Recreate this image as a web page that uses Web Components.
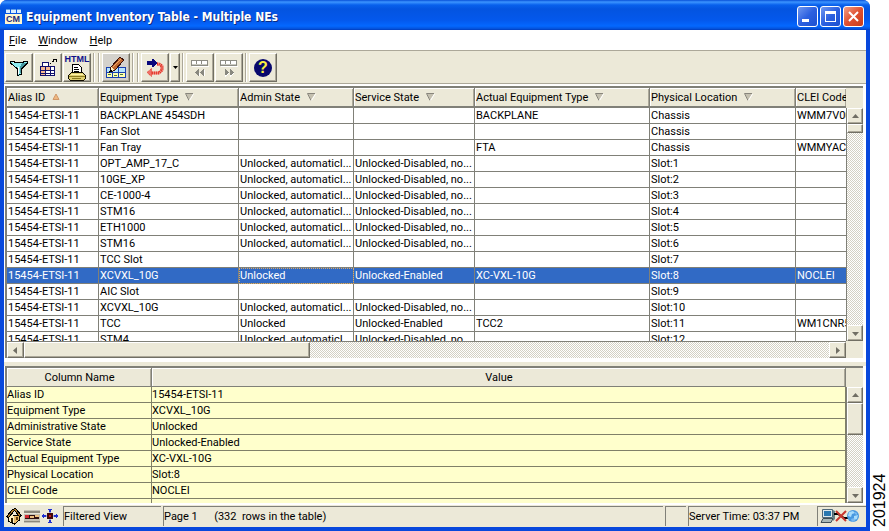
<!DOCTYPE html>
<html lang="en">
<head>
<meta charset="utf-8">
<title>Equipment Inventory Table - Multiple NEs</title>
<style>
  body {
    margin: 0;
    background: #fff;
    color: #000;
    font: 11px/15px Roboto, "DejaVu Sans Condensed", sans-serif;
    --face: #ece9d8;
    --shadow: #aca899;
    --line: #808078;
  }
</style>
</head>
<body>
<inventory-app></inventory-app>

<script>
const columns = [
  { name: "Alias ID", width: 92, sort: "up" },
  { name: "Equipment Type", width: 140, sort: "down" },
  { name: "Admin State", width: 115, sort: "down" },
  { name: "Service State", width: 121, sort: "down" },
  { name: "Actual Equipment Type", width: 175, sort: "down" },
  { name: "Physical Location", width: 146, sort: "down" },
  { name: "CLEI Code" },
];

const auto = "Unlocked, automaticI...";
const disabled = "Unlocked-Disabled, no...";
const equipment = [
  ["BACKPLANE 454SDH", "", "", "BACKPLANE", "Chassis", "WMM7V00"],
  ["Fan Slot", "", "", "", "Chassis", ""],
  ["Fan Tray", "", "", "FTA", "Chassis", "WMMYACT"],
  ["OPT_AMP_17_C", auto, disabled, "", "Slot:1", ""],
  ["10GE_XP", auto, disabled, "", "Slot:2", ""],
  ["CE-1000-4", auto, disabled, "", "Slot:3", ""],
  ["STM16", auto, disabled, "", "Slot:4", ""],
  ["ETH1000", auto, disabled, "", "Slot:5", ""],
  ["STM16", auto, disabled, "", "Slot:6", ""],
  ["TCC Slot", "", "", "", "Slot:7", ""],
  ["XCVXL_10G", "Unlocked", "Unlocked-Enabled", "XC-VXL-10G", "Slot:8", "NOCLEI"],
  ["AIC Slot", "", "", "", "Slot:9", ""],
  ["XCVXL_10G", auto, disabled, "", "Slot:10", ""],
  ["TCC", "Unlocked", "Unlocked-Enabled", "TCC2", "Slot:11", "WM1CNR5"],
  ["STM4", auto, disabled, "", "Slot:12", ""],
].map((row) => ["15454-ETSI-11", ...row]);

const details = [
  ["Alias ID", "15454-ETSI-11"],
  ["Equipment Type", "XCVXL_10G"],
  ["Administrative State", "Unlocked"],
  ["Service State", "Unlocked-Enabled"],
  ["Actual Equipment Type", "XC-VXL-10G"],
  ["Physical Location", "Slot:8"],
  ["CLEI Code", "NOCLEI"],
];

const icons = {
  app: `<svg width="17" height="17" viewBox="0 0 17 17" shape-rendering="crispEdges">
    <path fill="#d8ecff" d="M1 1h4v4H1zM6 1h5v4H6zM12 1h4v4h-4z"/>
    <path fill="#5c9ce8" d="M1 1h4v1H1zM6 1h5v1H6zM12 1h4v1h-4z"/>
    <path fill="#fff6d0" d="M0 6h17v10H0z"/>
    <text x="8" y="14" text-anchor="middle" fill="#1c2a7c" font-family="Liberation Sans" font-weight="bold" font-size="9">CM</text></svg>`,
  filter: `<svg width="20" height="18" viewBox="0 0 20 18" shape-rendering="crispEdges">
    <path fill="#8cecf0" d="M1 3h18v1l-6 6v6l-5 1v-7L1 4z"/>
    <path fill="#fff" d="M4 3h5v1H4zM9 8h1v7H9z"/>
    <path fill="#4898a0" d="M13 4h4l-4 4v6h-2V8z"/>
    <path fill="none" stroke="#000" d="M1.500 4v-2h4v1h9v-1h4v2l-6 6v5l-4 1.500V10z"/></svg>`,
  expand: `<svg width="20" height="20" viewBox="0 0 20 20" shape-rendering="crispEdges">
    <path fill="#10106c" d="M2 8h15v10H2zM4 4h7v5H4z"/>
    <path fill="#f5b890" d="M3 9h4v3H3zM8 9h4v3H8zM3 13h4v2H3zM3 16h4v1H3z"/>
    <path fill="#fff" d="M5 5h5v3H5zM13 9h3v3h-3zM8 13h4v2H8zM13 13h3v2h-3zM8 16h4v1H8zM13 16h3v1h-3z"/>
    <path fill="none" stroke="#000" stroke-dasharray="2 1" d="M12 6l6-5"/>
    <path fill="none" stroke="#000" d="M15 1.500h3.500V4"/></svg>`,
  pencil: `<svg width="22" height="24" viewBox="0 0 22 24" shape-rendering="crispEdges">
    <path fill="#1840b0" d="M1 11h20v11H1z"/>
    <path fill="#b4e4fc" d="M2 12h5v4H2zM8 12h5v4H8zM14 12h6v4h-6z"/>
    <path fill="#ffffb0" d="M2 17h5v4H2zM8 17h5v4H8zM14 17h6v4h-6z"/>
    <path fill="#487840" d="M3 18h3v1H3zM9 19h3v1H9zM15 18h3v1h-3z"/>
    <path fill="#c06830" stroke="#381008" d="M6 11L15 1l4 3-9 10-5 2z"/>
    <path fill="none" stroke="#f0a868" d="M8 11l8-8"/>
    <path fill="#fff0c0" d="M6 11l4 3-4 1z"/><path fill="#000" d="M5 14h2v2H4z"/></svg>`,
  redirect: `<svg width="20" height="20" viewBox="0 0 20 20">
    <path fill="none" stroke="#f49088" stroke-width="3" d="M12 6h2l3 2v4l-3 3H6"/>
    <path fill="none" stroke="#e03020" stroke-width="3" stroke-dasharray="1 1" d="M12 6h2l3 2v4l-3 3H6"/>
    <path fill="#f07068" stroke="#e03020" stroke-dasharray="1 1" d="M6.500 10.500v8L2 14.500z"/>
    <path fill="#08087c" shape-rendering="crispEdges" d="M2 3h5V1h1l4 4-4 4H7V7H2z"/></svg>`,
  caret: `<svg width="5" height="3" viewBox="0 0 5 3"><path d="M0 0h5L2.500 3z"/></svg>`,
  previous: `<svg width="18" height="18" viewBox="0 0 18 18" shape-rendering="crispEdges">
    <path fill="#8c8c84" d="M0 1h17v6H0z"/><path fill="#fff" d="M1 2h4v3H1zM6 2h4v3H6zM11 2h5v3h-5zM1 7h17v1H1z"/>
    <path fill="#c8c8c0" d="M1 5h15v1H1z"/>
    <path fill="#888880" d="M8 10v7l-4-3.500zM13 10v7l-4-3.500z"/><path fill="#fff" d="M8 17h1v-3H8zM13 17h1v-6h-1z"/></svg>`,
  next: `<svg width="18" height="18" viewBox="0 0 18 18" shape-rendering="crispEdges">
    <path fill="#8c8c84" d="M0 1h17v6H0z"/><path fill="#fff" d="M1 2h4v3H1zM6 2h4v3H6zM11 2h5v3h-5zM1 7h17v1H1z"/>
    <path fill="#c8c8c0" d="M1 5h15v1H1z"/>
    <path fill="#888880" d="M5 10v7l4-3.500zM10 10v7l4-3.500z"/><path fill="none" stroke="#fff" d="M5 17.500l4-3M10 17.500l4-3"/></svg>`,
  printer: `<svg width="20" height="17" viewBox="0 0 20 17" shape-rendering="crispEdges">
    <path fill="#fff" stroke="#000" d="M5.500 7.500v-7h6l3 3v5"/>
    <path stroke="#000" d="M7 3.500h4M7 5.500h5M7 7.500h5"/>
    <path fill="#e0d070" stroke="#100c00" d="M4.500 8.500h11l3 3v3l-2 2h-13l-2-2v-3z"/>
    <path fill="#fff4a8" d="M4 10h12v1H4z"/><path fill="#8c7c20" d="M2 12h16v1H2zM5 14h9v1H5z"/></svg>`,
  home: `<svg width="16" height="17" viewBox="0 0 16 17" shape-rendering="crispEdges">
    <path fill="#e8b868" stroke="#000" d="M2.500 8v5l6 3 5-4V7z"/>
    <path fill="#fff0c0" d="M3 8l3-3 2 4v6l-5-2z"/>
    <path fill="#a87828" stroke="#000" d="M.5 8.500l6-7 3-1 6 7-2 1-5-6-6 7z"/>
    <path fill="#302000" d="M5 10h2v4H5z"/><path fill="#604010" d="M10 9h2v3h-2z"/></svg>`,
  shelf: `<svg width="16" height="13" viewBox="0 0 16 13" shape-rendering="crispEdges">
    <path fill="#c4c0b4" d="M0 0h16v13H0z"/><path fill="#8c887c" d="M0 1h16v2H0zM0 11h16v1H0z"/>
    <path fill="#e8e4d8" d="M0 3h16v1H0z"/><path fill="#301010" d="M1 5h14v4H1z"/>
    <path fill="#d02830" d="M1 5h4v3H1z"/><path fill="#f0c080" d="M6 6h4v2H6zM11 5h4v2h-4z"/></svg>`,
  network: `<svg width="16" height="16" viewBox="0 0 16 16" shape-rendering="crispEdges">
    <path fill="#a0a8e0" d="M7 4h2v8H7zM4 7h8v2H4z"/>
    <path fill="#2030d0" d="M6 1h4v1H9v2H7V2H6zM7 12h2v2h1v1H6v-1h1zM0 7h1V6h1v1h2v2H2v1H1V9H0zM12 7h2V6h1v1h1v2h-1v1h-1V9h-2z"/>
    <path fill="#400808" d="M5 5h6v6H5z"/><path fill="#c82018" d="M7 7h2v2H7z"/></svg>`,
  offline: `<svg width="40" height="16" viewBox="0 0 40 16">
    <path fill="#dce8ec" stroke="#506878" d="M2.500 1.500h10v8h-10z"/><path fill="#2878b0" d="M4 3h7v5H4z"/>
    <path fill="#a8b8b8" stroke="#405058" d="M1 14.500l2-4h10l-2 4z"/><path fill="#688088" d="M13 2l2 1v8l-2 2z"/>
    <path fill="none" stroke="#000" stroke-width="2" d="M14 6h4l6 4h4"/>
    <path stroke="#c83830" stroke-width="2" d="M16 3l10 10M26 3L16 13"/>
    <circle cx="33" cy="8" r="6" fill="#4898e0"/>
    <path fill="#a8dcfc" d="M29 4l4-1 2 2-3 1-1 3-3-1zM34 8l4-1-1 4-3 1z"/>
    <path fill="#78b8f0" d="M31 11l3-1 1 3-3 1zM35 4l2 1v2l-2-1z"/></svg>`,
  minimize: `<svg width="19" height="19" viewBox="0 0 19 19"><path fill="#fff" d="M4 12h7v3H4z"/></svg>`,
  maximize: `<svg width="19" height="19" viewBox="0 0 19 19" shape-rendering="crispEdges"><path fill="none" stroke="#fff" d="M4.500 5.500h10v9h-10z"/><path fill="#fff" d="M4 4h11v3H4z"/></svg>`,
  close: `<svg width="19" height="19" viewBox="0 0 19 19"><path stroke="#fff" stroke-width="2" d="M5 5l9 9M14 5l-9 9"/></svg>`,
};

function sortMark(direction) {
  if (direction === "up") {
    return `<svg width="8" height="8" viewBox="0 0 8 8"><path fill="#f0b880" stroke="#d09868" d="M1 6.500h6L4 1z"/></svg>`;
  }
  return `<svg width="9" height="8" viewBox="0 0 9 8"><path fill="#c4c0b0" d="M1 1h7L4 7z"/><path fill="none" stroke="#88857c" d="M8 .5H.5l3.500 7"/><path stroke="#fff" d="M8.500 1L4.500 7.500"/></svg>`;
}

class ToolButton extends HTMLElement {
  constructor() {
    super();
    this.attachShadow({ mode: "open" });
    this.shadowRoot.innerHTML = `
      <style>
        :host { display: block; }
        button {
          width: 28px;
          height: 29px;
          padding: 0;
          display: flex;
          flex-direction: column;
          align-items: center;
          justify-content: center;
          box-sizing: border-box;
          font: inherit;
          color: #10108c;
          background: var(--face);
          border: 1px solid;
          border-color: #fff #716f64 #716f64 #fff;
          box-shadow: inset -1px -1px var(--shadow);
        }
        :host([narrow]) button { width: 10px; }
        :host([pressed]) button { background: #d4d2cc; }
        svg { display: block; }
        ::slotted(b) { display: block; font: bold 9px/9px "Liberation Sans", sans-serif; }
        ::slotted(strong) {
          display: block;
          width: 18px;
          height: 18px;
          border-radius: 50%;
          background: #08086c;
          color: #f8f040;
          font: bold 16px/18px "Liberation Sans", sans-serif;
          text-align: center;
        }
      </style>
      <button type="button" aria-label="${this.getAttribute("label")}"><slot></slot>${icons[this.getAttribute("icon")] || ""}</button>
    `;
  }
}
customElements.define("tool-button", ToolButton);

class ToolSeparator extends HTMLElement {
  constructor() {
    super();
    this.attachShadow({ mode: "open" });
    this.shadowRoot.innerHTML = `
      <style>
        :host {
          display: block;
          width: 2px;
          height: 29px;
          margin: 0 1px;
          border-left: 1px solid var(--shadow);
          border-right: 1px solid #fff;
          box-sizing: border-box;
        }
      </style>
    `;
  }
}
customElements.define("tool-separator", ToolSeparator);

class TitleBar extends HTMLElement {
  constructor() {
    super();
    this.attachShadow({ mode: "open" });
    this.shadowRoot.innerHTML = `
      <style>
        :host {
          display: flex;
          align-items: center;
          gap: 4px;
          height: 30px;
          padding: 3px 6px 0 5px;
          box-sizing: border-box;
          color: #fff;
          border-radius: 7px 7px 0 0;
          background: linear-gradient(#0850d8 0, #3c94ff 2px, #0860ec 5px, #0454e0 9px, #0458ec 20px, #0468ff 26px, #0450d8 29px, #0038b8 30px);
        }
        h1 {
          flex: 1;
          min-width: 0;
          margin: 0;
          overflow: hidden;
          white-space: nowrap;
          font: bold 12px/16px "DejaVu Sans Condensed", sans-serif;
          text-shadow: 1px 1px #0c2c80;
        }
        div { display: flex; gap: 2px; }
        button {
          width: 21px;
          height: 21px;
          padding: 0;
          border: 1px solid #fff;
          border-radius: 3px;
          background: linear-gradient(135deg, #7098f0, #2c60e0 50%, #1c50d0);
        }
        button.close { background: linear-gradient(135deg, #f0a088, #e05030 50%, #c83c18); }
        svg { display: block; }
      </style>
      ${icons.app}
      <h1><slot></slot></h1>
      <div>
        <button type="button" aria-label="Minimize">${icons.minimize}</button>
        <button type="button" aria-label="Maximize">${icons.maximize}</button>
        <button type="button" class="close" aria-label="Close">${icons.close}</button>
      </div>
    `;
  }
}
customElements.define("title-bar", TitleBar);

class MenuBar extends HTMLElement {
  constructor() {
    super();
    this.attachShadow({ mode: "open" });
    this.shadowRoot.innerHTML = `
      <style>
        :host {
          display: flex;
          gap: 12px;
          height: 20px;
          padding: 0 5px;
          box-sizing: border-box;
          align-items: center;
          background: #fff;
        }
        ::slotted(button) { border: 0; padding: 0; background: none; font: inherit; color: inherit; }
      </style>
      <slot></slot>
    `;
  }
}
customElements.define("menu-bar", MenuBar);

class ScrollBar extends HTMLElement {
  constructor() {
    super();
    this.attachShadow({ mode: "open" });
    const across = this.hasAttribute("horizontal");
    const arrow = (d) => `<svg width="7" height="7" viewBox="0 0 7 7"><path fill="#706e64" d="${d}"/></svg>`;
    const first = across ? "M5 0v7L1 3.500z" : "M0 5h7L3.500 1z";
    const last = across ? "M2 0v7l4-3.500z" : "M0 2h7L3.500 6z";
    this.shadowRoot.innerHTML = `
      <style>
        :host {
          display: flex;
          flex-direction: ${across ? "row" : "column"};
          background: repeating-conic-gradient(#d4d1c4 0 25%, #fff 0 50%) 0 0 / 2px 2px;
        }
        button, .thumb {
          box-sizing: border-box;
          background: var(--face);
          border: 1px solid;
          border-color: #fff #716f64 #716f64 #fff;
          box-shadow: inset -1px -1px var(--shadow);
        }
        button {
          flex: none;
          width: ${across ? 17 : 16}px;
          height: 16px;
          padding: 0;
          display: flex;
          align-items: center;
          justify-content: center;
        }
        .thumb { flex: 0 0 var(--thumb); }
        .track { flex: 1; }
      </style>
      <button type="button" aria-label="Scroll back">${arrow(first)}</button>
      <div class="thumb"></div>
      <div class="track"></div>
      <button type="button" aria-label="Scroll forward">${arrow(last)}</button>
    `;
  }
}
customElements.define("scroll-bar", ScrollBar);

const tableStyle = `
  :host {
    display: grid;
    grid-template-columns: minmax(0, 1fr) 17px;
    min-height: 0;
    border: 2px solid var(--line);
    border-right: 0;
    border-bottom: 0;
    background: var(--face);
    overflow: hidden;
  }
  .view { overflow: hidden; min-height: 0; }
  table { width: 100%; table-layout: fixed; border-collapse: separate; border-spacing: 0; }
  th, td {
    box-sizing: border-box;
    height: 16px;
    padding: 0 0 0 1px;
    overflow: hidden;
    white-space: nowrap;
    text-align: left;
    border-right: 1px solid var(--line);
    border-bottom: 1px solid var(--line);
  }
  th {
    height: 19px;
    font-weight: normal;
    background: var(--face);
    box-shadow: inset 1px 1px #fff, inset -1px 0 var(--shadow);
  }
`;

class EquipmentTable extends HTMLElement {
  constructor() {
    super();
    this.attachShadow({ mode: "open" });
    this.shadowRoot.innerHTML = `
      <style>
        ${tableStyle}
        :host { grid-template-rows: minmax(0, 1fr) 17px; }
        th { height: 20px; border-bottom-width: 2px; }
        th svg { margin-left: 4px; }
        th:last-child, td:last-child { border-right: 0; }
        tbody { background: #fff; }
        tr[aria-selected] { background: #316ac5; color: #fff; }
        tr[aria-selected] td:nth-child(3) { outline: 1px dotted #d8a868; outline-offset: -1px; }
        .side { margin-top: 20px; --thumb: 9px; border-left: 1px solid var(--line); }
        .bottom { --thumb: 286px; border-top: 1px solid var(--line); }
      </style>
      <div class="view">
        <table>
          <colgroup>${columns.map((c) => `<col${c.width ? ` style="width: ${c.width}px"` : ""}>`).join("")}</colgroup>
          <thead><tr>${columns.map((c) => `<th scope="col">${c.name}${c.sort ? " " + sortMark(c.sort) : ""}</th>`).join("")}</tr></thead>
          <tbody>${equipment.map((row, i) => `<tr${i === 10 ? ` aria-selected="true"` : ""}>${row.map((cell) => `<td>${cell}</td>`).join("")}</tr>`).join("")}</tbody>
        </table>
      </div>
      <scroll-bar class="side"></scroll-bar>
      <scroll-bar class="bottom" horizontal></scroll-bar>
    `;
  }
}
customElements.define("equipment-table", EquipmentTable);

class DetailTable extends HTMLElement {
  constructor() {
    super();
    this.attachShadow({ mode: "open" });
    this.shadowRoot.innerHTML = `
      <style>
        ${tableStyle}
        .view { background: #ffffcc; }
        th { text-align: center; }
        col:first-child { width: 145px; }
        td { padding-left: 0; border-color: #808068; }
        scroll-bar { margin-top: 19px; --thumb: 32px; border-left: 1px solid var(--line); }
      </style>
      <div class="view">
        <table>
          <colgroup><col><col></colgroup>
          <thead><tr><th scope="col">Column Name</th><th scope="col">Value</th></tr></thead>
          <tbody>${details.map(([name, value]) => `<tr><td>${name}</td><td>${value}</td></tr>`).join("")}<tr><td></td><td></td></tr></tbody>
        </table>
      </div>
      <scroll-bar></scroll-bar>
    `;
  }
}
customElements.define("detail-table", DetailTable);

class StatusBar extends HTMLElement {
  constructor() {
    super();
    this.attachShadow({ mode: "open" });
    this.shadowRoot.innerHTML = `
      <style>
        :host {
          display: flex;
          gap: 2px;
          height: 22px;
          padding: 1px 0;
          box-sizing: border-box;
          background: var(--face);
        }
        .icons { display: flex; gap: 2px; align-items: center; width: 55px; padding-left: 2px; }
        .cell {
          box-sizing: border-box;
          line-height: 19px;
          white-space: pre;
          overflow: hidden;
          border-left: 1px solid var(--line);
          border-top: 1px solid var(--line);
        }
        .view { width: 98px; }
        .page { flex: 1; }
        .gap { width: 21px; }
        .time { width: 112px; }
        .link { width: 49px; margin-left: 15px; padding: 1px 2px; }
      </style>
      <div class="icons">${icons.home}${icons.shelf}${icons.network}</div>
      <div class="cell view">Filtered View</div>
      <div class="cell page">Page 1      (332  rows in the table)</div>
      <div class="cell gap"></div>
      <div class="cell time">Server Time: 03:37 PM</div>
      <div class="cell link">${icons.offline}</div>
    `;
  }
}
customElements.define("status-bar", StatusBar);

class InventoryApp extends HTMLElement {
  constructor() {
    super();
    this.attachShadow({ mode: "open" });
    this.shadowRoot.innerHTML = `
      <style>
        :host { display: flex; height: 100vh; }
        main {
          flex: 1;
          min-width: 0;
          display: flex;
          flex-direction: column;
          background: #0848dc;
          border-radius: 7px 7px 0 0;
        }
        .body {
          flex: 1;
          min-height: 0;
          display: flex;
          flex-direction: column;
          margin: 0 4px 4px;
          background: #fff;
        }
        .tools {
          display: flex;
          gap: 1px;
          height: 34px;
          padding: 2px 1px;
          margin-bottom: 2px;
          box-sizing: border-box;
          background: var(--face);
          border-top: 1px solid var(--shadow);
          border-bottom: 1px solid var(--shadow);
        }
        equipment-table { flex: 271; margin: 0 3px 0 1px; }
        .splitter { height: 4px; margin-top: 4px; background: var(--face); cursor: row-resize; }
        detail-table { flex: 135; margin: 0 3px 2px 1px; }
        aside {
          width: 19px;
          padding-top: 4px;
          box-sizing: border-box;
          writing-mode: vertical-rl;
          transform: rotate(180deg);
          font: 16px/19px "Liberation Sans", sans-serif;
        }
      </style>
      <main>
        <title-bar>Equipment Inventory Table - Multiple NEs</title-bar>
        <div class="body">
          <menu-bar>
            <button type="button"><u>F</u>ile</button>
            <button type="button"><u>W</u>indow</button>
            <button type="button"><u>H</u>elp</button>
          </menu-bar>
          <div class="tools">
            <tool-button icon="filter" label="Filter"></tool-button>
            <tool-button icon="expand" label="Columns"></tool-button>
            <tool-button icon="printer" label="Export HTML"><b>HTML</b></tool-button>
            <tool-separator></tool-separator>
            <tool-separator></tool-separator>
            <tool-button icon="pencil" label="Edit" pressed></tool-button>
            <tool-separator></tool-separator>
            <tool-separator></tool-separator>
            <tool-button icon="redirect" label="Go to"></tool-button>
            <tool-button icon="caret" label="More" narrow></tool-button>
            <tool-separator></tool-separator>
            <tool-button icon="previous" label="Previous page"></tool-button>
            <tool-button icon="next" label="Next page"></tool-button>
            <tool-separator></tool-separator>
            <tool-button label="Help"><strong>?</strong></tool-button>
          </div>
          <equipment-table></equipment-table>
          <div class="splitter"></div>
          <detail-table></detail-table>
          <status-bar></status-bar>
        </div>
      </main>
      <aside>201924</aside>
    `;
  }
}
customElements.define("inventory-app", InventoryApp);
</script>
</body>
</html>
